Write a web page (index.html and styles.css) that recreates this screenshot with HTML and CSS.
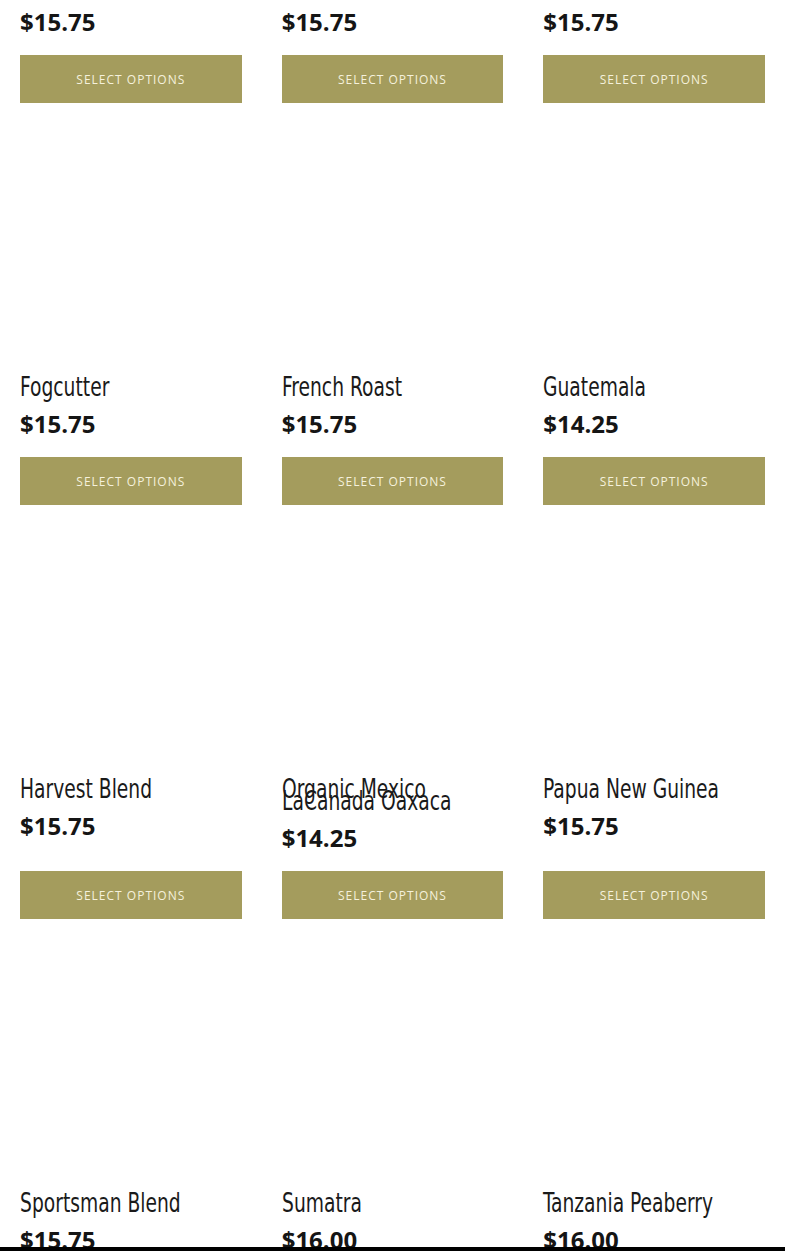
FILE: index.html
```html
<!DOCTYPE html>
<html lang="en">
<head>
<meta charset="utf-8">
<title>Coffee</title>
<link rel="stylesheet" href="styles.css">
</head>
<body>
<main class="shop">
  <ul class="products">
    <li class="product">
      <div class="thumb"></div>
      <h2 class="title">Espresso Blend</h2>
      <span class="price">$15.75</span>
      <a class="button" href="#">Select options</a>
    </li>
    <li class="product">
      <div class="thumb"></div>
      <h2 class="title">Costa Rica</h2>
      <span class="price">$15.75</span>
      <a class="button" href="#">Select options</a>
    </li>
    <li class="product">
      <div class="thumb"></div>
      <h2 class="title">El Salvador</h2>
      <span class="price">$15.75</span>
      <a class="button" href="#">Select options</a>
    </li>

    <li class="product">
      <div class="thumb"></div>
      <h2 class="title">Fogcutter</h2>
      <span class="price">$15.75</span>
      <a class="button" href="#">Select options</a>
    </li>
    <li class="product">
      <div class="thumb"></div>
      <h2 class="title">French Roast</h2>
      <span class="price">$15.75</span>
      <a class="button" href="#">Select options</a>
    </li>
    <li class="product">
      <div class="thumb"></div>
      <h2 class="title">Guatemala</h2>
      <span class="price">$14.25</span>
      <a class="button" href="#">Select options</a>
    </li>

    <li class="product">
      <div class="thumb"></div>
      <h2 class="title">Harvest Blend</h2>
      <span class="price">$15.75</span>
      <a class="button" href="#">Select options</a>
    </li>
    <li class="product">
      <div class="thumb"></div>
      <h2 class="title">Organic Mexico LaCanada Oaxaca</h2>
      <span class="price">$14.25</span>
      <a class="button" href="#">Select options</a>
    </li>
    <li class="product">
      <div class="thumb"></div>
      <h2 class="title">Papua New Guinea</h2>
      <span class="price">$15.75</span>
      <a class="button" href="#">Select options</a>
    </li>

    <li class="product">
      <div class="thumb"></div>
      <h2 class="title">Sportsman Blend</h2>
      <span class="price">$15.75</span>
      <a class="button" href="#">Select options</a>
    </li>
    <li class="product">
      <div class="thumb"></div>
      <h2 class="title">Sumatra</h2>
      <span class="price">$16.00</span>
      <a class="button" href="#">Select options</a>
    </li>
    <li class="product">
      <div class="thumb"></div>
      <h2 class="title">Tanzania Peaberry</h2>
      <span class="price">$16.00</span>
      <a class="button" href="#">Select options</a>
    </li>
  </ul>
</main>
<div class="bottom-bar"></div>
</body>
</html>
```

FILE: styles.css
```css
html, body {
  margin: 0;
  padding: 0;
  background: #ffffff;
}

body {
  font-family: "Open Sans", "Liberation Sans", sans-serif;
  color: #1a1a1a;
  overflow: hidden;
}

.shop {
  padding: 0 20px;
  margin-top: -259px;
}

.products {
  list-style: none;
  margin: 0;
  padding: 0;
  display: grid;
  grid-template-columns: repeat(3, 1fr);
  column-gap: 40px;
  row-gap: 40px;
}

.product {
  display: flex;
  flex-direction: column;
  min-width: 0;
}

.thumb {
  height: 223px;
  margin-bottom: 15px;
}

/* condensed display face (Oswald-like) approximated by a horizontally
   compressed DejaVu Sans Condensed */
.title {
  width: 130%;
  margin: 0 0 19px;
  font-family: "DejaVu Sans Condensed", "DejaVu Sans", sans-serif;
  font-stretch: condensed;
  font-weight: 400;
  font-size: 27px;
  line-height: 12px;
  color: #1a1a1a;
  transform: scaleX(0.77);
  transform-origin: left center;
}

.price {
  display: block;
  font-family: "Open Sans", sans-serif;
  font-weight: 700;
  font-size: 24px;
  line-height: 24px;
  margin-bottom: 21px;
  color: #151515;
}

.button {
  margin-top: auto;
  display: flex;
  align-items: center;
  justify-content: center;
  height: 48px;
  background: #a49c5d;
  color: #f5f1dc;
  text-decoration: none;
  text-transform: uppercase;
  font-family: "Open Sans", sans-serif;
  font-size: 12px;
  letter-spacing: 1px;
}

.bottom-bar {
  position: fixed;
  left: 0;
  right: 0;
  bottom: 0;
  height: 4px;
  background: #000;
}
```
